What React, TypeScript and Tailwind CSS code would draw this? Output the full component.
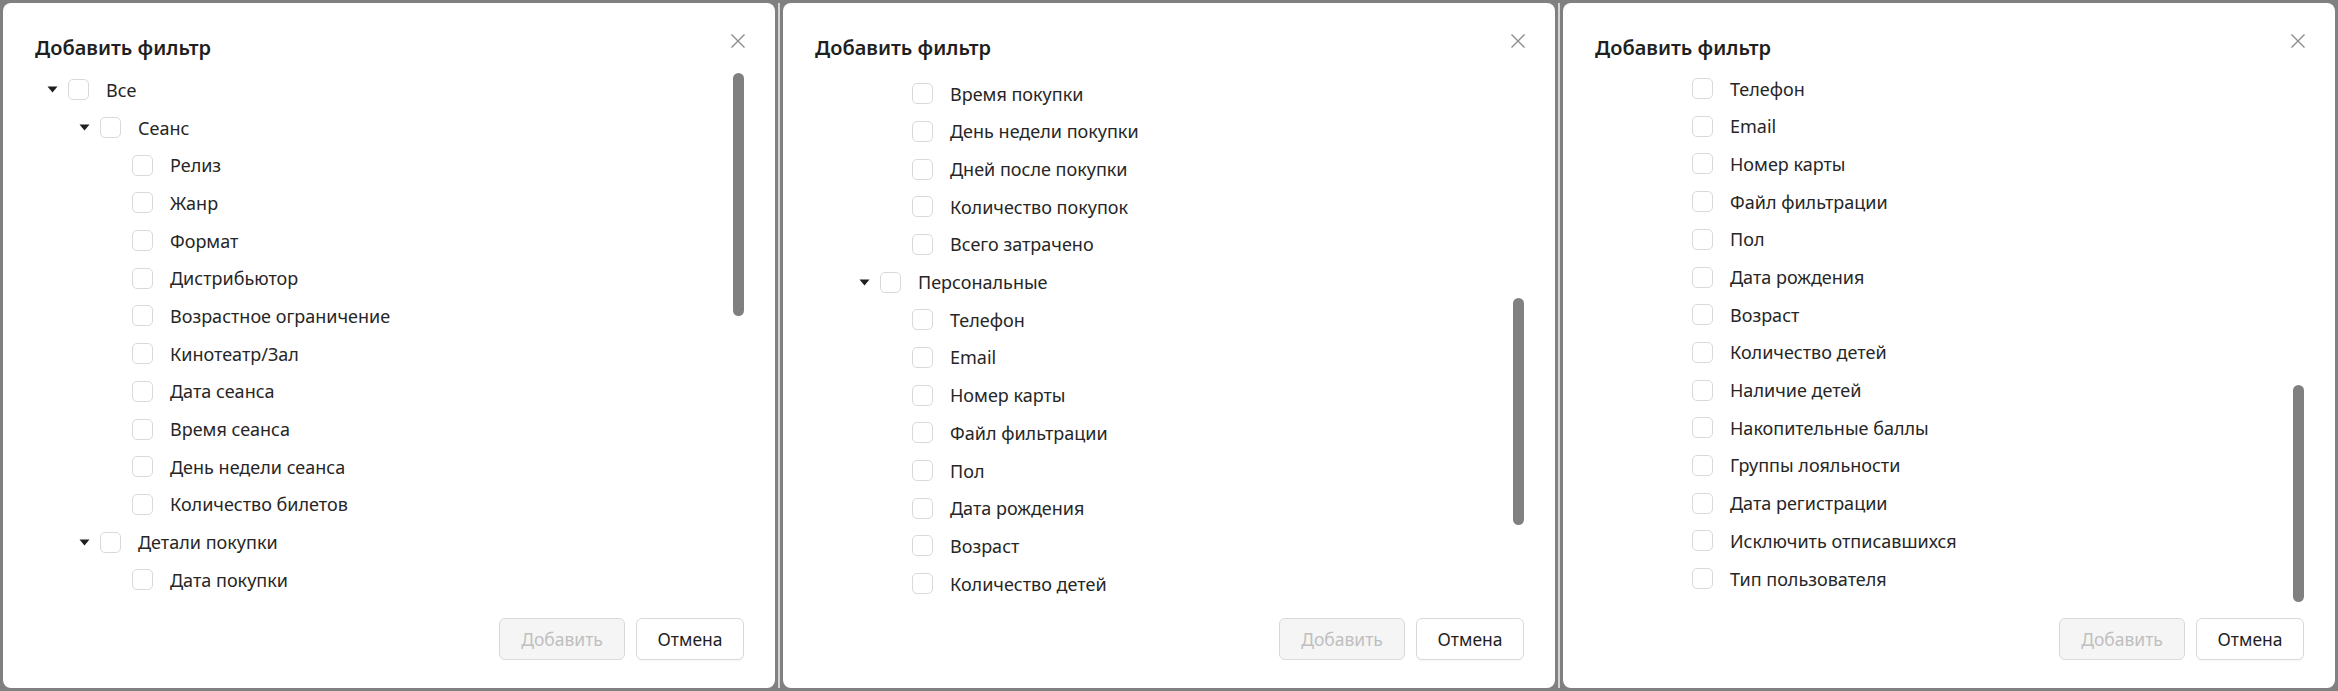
import React from "react";

type Row = { label: string; level: number; caret?: boolean };

const rows: Row[] = [
  { label: "Все", level: 0, caret: true },
  { label: "Сеанс", level: 1, caret: true },
  { label: "Релиз", level: 2 },
  { label: "Жанр", level: 2 },
  { label: "Формат", level: 2 },
  { label: "Дистрибьютор", level: 2 },
  { label: "Возрастное ограничение", level: 2 },
  { label: "Кинотеатр/Зал", level: 2 },
  { label: "Дата сеанса", level: 2 },
  { label: "Время сеанса", level: 2 },
  { label: "День недели сеанса", level: 2 },
  { label: "Количество билетов", level: 2 },
  { label: "Детали покупки", level: 1, caret: true },
  { label: "Дата покупки", level: 2 },
  { label: "Время покупки", level: 2 },
  { label: "День недели покупки", level: 2 },
  { label: "Дней после покупки", level: 2 },
  { label: "Количество покупок", level: 2 },
  { label: "Всего затрачено", level: 2 },
  { label: "Персональные", level: 1, caret: true },
  { label: "Телефон", level: 2 },
  { label: "Email", level: 2 },
  { label: "Номер карты", level: 2 },
  { label: "Файл фильтрации", level: 2 },
  { label: "Пол", level: 2 },
  { label: "Дата рождения", level: 2 },
  { label: "Возраст", level: 2 },
  { label: "Количество детей", level: 2 },
  { label: "Наличие детей", level: 2 },
  { label: "Накопительные баллы", level: 2 },
  { label: "Группы лояльности", level: 2 },
  { label: "Дата регистрации", level: 2 },
  { label: "Исключить отписавшихся", level: 2 },
  { label: "Тип пользователя", level: 2 },
];

const indentClass = ["pl-0", "pl-[32px]", "pl-[64px]"];

function Caret() {
  return (
    <svg width="11" height="7" viewBox="0 0 11 7">
      <path d="M0.5 0.5 L10.5 0.5 L5.5 6.5 Z" fill="#1f1f1f" />
    </svg>
  );
}

function CloseIcon() {
  return (
    <svg width="16" height="16" viewBox="0 0 16 16">
      <path d="M1.5 1.5 L14.5 14.5 M14.5 1.5 L1.5 14.5" stroke="#8c8c8c" strokeWidth="1.4" fill="none" />
    </svg>
  );
}

function TreeRow({ row }: { row: Row }) {
  return (
    <div className={"flex h-[37.7px] shrink-0 items-center " + indentClass[row.level]}>
      <div className="flex w-[32px] shrink-0 items-center justify-center">{row.caret ? <Caret /> : null}</div>
      <div className="h-[21px] w-[21px] shrink-0 rounded-[5px] border border-[#d9d9d9] bg-white" />
      <span className="ml-[17px] whitespace-nowrap text-[18px] leading-[26px] text-[#262626]">{row.label}</span>
    </div>
  );
}

function Panel({ scrollClass, thumbClass }: { scrollClass: string; thumbClass: string }) {
  return (
    <div className="flex h-full flex-1 flex-col rounded-[8px] bg-white">
      <div className="flex h-[68px] shrink-0 items-start justify-between pl-[32px] pr-[29px] pt-[30px]">
        <span className="text-[20px] font-semibold leading-[30px] text-[#1f1f1f]">Добавить фильтр</span>
        <CloseIcon />
      </div>
      <div className="flex h-[527px] shrink-0">
        <div className="flex-1 overflow-hidden pl-[33px]">
          <div className={"flex flex-col " + scrollClass}>
            {rows.map((r, i) => (
              <TreeRow key={i} row={r} />
            ))}
          </div>
        </div>
        <div className="mr-[31px] w-[11px] shrink-0">
          <div className={"w-[11px] rounded-full bg-[#808080] " + thumbClass} />
        </div>
      </div>
      <div className="flex shrink-0 justify-end gap-[11px] pr-[31px] pt-[20px]">
        <div className="flex h-[42px] w-[126px] items-center justify-center rounded-[6px] border border-[#d9d9d9] bg-[#f5f5f5] text-[17.5px] text-[#bfbfbf]">
          Добавить
        </div>
        <div className="flex h-[42px] w-[108px] items-center justify-center rounded-[6px] border border-[#d9d9d9] bg-white text-[17.5px] text-[#1f1f1f] shadow-[0_2px_0_rgba(0,0,0,0.02)]">
          Отмена
        </div>
      </div>
    </div>
  );
}

export default function App() {
  return (
    <div
      className="flex h-[691px] w-[2338px] overflow-hidden bg-[#808080] py-[3px]"
      style={{ fontFamily: '"Noto Sans", "Open Sans", sans-serif' }}
    >
      <div className="flex flex-1 px-[3px]">
        <Panel scrollClass="mt-0" thumbClass="mt-[2px] h-[243px]" />
      </div>
      <div className="w-[2px] bg-[#d4d4d4]" />
      <div className="flex flex-1 px-[3px]">
        <Panel scrollClass="-mt-[523.8px]" thumbClass="mt-[227px] h-[227px]" />
      </div>
      <div className="w-[2px] bg-[#d4d4d4]" />
      <div className="flex flex-1 px-[3px]">
        <Panel scrollClass="-mt-[755px]" thumbClass="mt-[314px] h-[217px]" />
      </div>
    </div>
  );
}
